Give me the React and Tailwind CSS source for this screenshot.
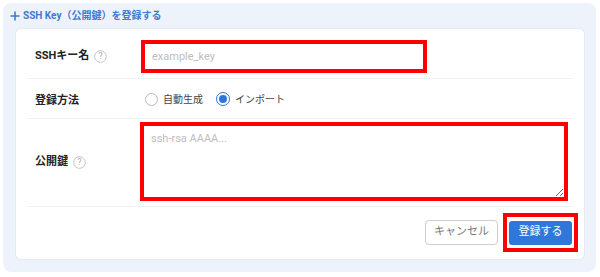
import { useState } from "react";

const font = { fontFamily: "Roboto, 'Noto Sans CJK JP', sans-serif" };

function Help() {
  return (
    <svg width="13" height="13" viewBox="0 0 13 13" className="shrink-0">
      <circle cx="6.5" cy="6.5" r="5.8" fill="none" stroke="#bdbdbd" strokeWidth="0.9" />
      <text x="6.5" y="9.4" textAnchor="middle" fontSize="8.5" fill="#adadad" fontFamily="Roboto, sans-serif">
        ?
      </text>
    </svg>
  );
}

function Radio({ checked, label, onClick }) {
  return (
    <button type="button" onClick={onClick} className="flex items-center gap-[5px]">
      {checked ? (
        <span className="w-[14px] h-[14px] rounded-full border-[1.5px] border-[#2f76d8] flex items-center justify-center">
          <span className="w-[8px] h-[8px] rounded-full bg-[#2f76d8]" />
        </span>
      ) : (
        <span className="w-[13px] h-[13px] rounded-full border border-[#b9b9b9] bg-white" />
      )}
      <span className="text-[10px] text-[#444]">{label}</span>
    </button>
  );
}

export default function App() {
  const [method, setMethod] = useState("import");

  return (
    <div className="w-[600px] h-[277px] bg-white pt-[3px] pl-[3px]" style={font}>
      <div className="w-[593px] h-[269px] bg-[#eef3fb] rounded-lg px-[12px]">
        <div className="h-[25px] flex items-center -ml-[5px] gap-[3px] text-[#3a7bd5] text-[10px] font-bold">
          <svg width="10" height="10" viewBox="0 0 10 10">
            <path d="M5 0.5v9M0.5 5h9" stroke="#3a7bd5" strokeWidth="1.6" />
          </svg>
          <span>SSH Key（公開鍵）を登録する</span>
        </div>

        <div className="w-[570px] h-[232px] bg-white rounded-md border border-[#e4e9f0] px-[12px]">
          {/* row 1 */}
          <div className="flex items-start pt-[11px] pb-[5px] border-b border-[#eef0f3]">
            <div className="w-[113px] h-[33px] pl-[7px] flex items-center gap-[5px]">
              <span className="text-[11px] font-bold text-[#222]">SSHキー名</span>
              <Help />
            </div>
            <input
              className="w-[286px] h-[33px] border-4 border-[#ff0000] px-[7px] text-[11px] outline-none placeholder:text-[#bdbdbd]"
              placeholder="example_key"
            />
          </div>

          {/* row 2 */}
          <div className="flex items-center h-[40px] pt-[1px] border-b border-[#eef0f3]">
            <div className="w-[117px] pl-[7px]">
              <span className="text-[11px] font-bold text-[#222]">登録方法</span>
            </div>
            <div className="flex items-center gap-[13px]">
              <Radio checked={method === "auto"} label="自動生成" onClick={() => setMethod("auto")} />
              <Radio checked={method === "import"} label="インポート" onClick={() => setMethod("import")} />
            </div>
          </div>

          {/* row 3 */}
          <div className="flex items-center pt-[3px] pb-[5px] border-b border-[#eef0f3]">
            <div className="w-[112px] pl-[7px] pt-[2px] flex items-center gap-[5px]">
              <span className="text-[11px] font-bold text-[#222]">公開鍵</span>
              <Help />
            </div>
            <textarea
              className="w-[428px] h-[79px] border-4 border-[#ff0000] px-[7px] py-[5px] text-[11px] outline-none placeholder:text-[#bdbdbd] block"
              placeholder="ssh-rsa AAAA..."
            />
          </div>

          {/* buttons */}
          <div className="flex justify-end items-center gap-[5px] pt-[6px] -mr-[6px]">
            <button className="w-[73px] h-[25px] rounded border border-[#cfcfcf] bg-white text-[11px] text-[#7a7a7a]">
              キャンセル
            </button>
            <div className="w-[75px] h-[39px] border-4 border-[#ff0000] flex items-center justify-center">
              <button className="w-[63px] h-[24px] rounded-[3px] bg-[#2f78d9] text-[11px] text-white">
                登録する
              </button>
            </div>
          </div>
        </div>
      </div>
    </div>
  );
}
